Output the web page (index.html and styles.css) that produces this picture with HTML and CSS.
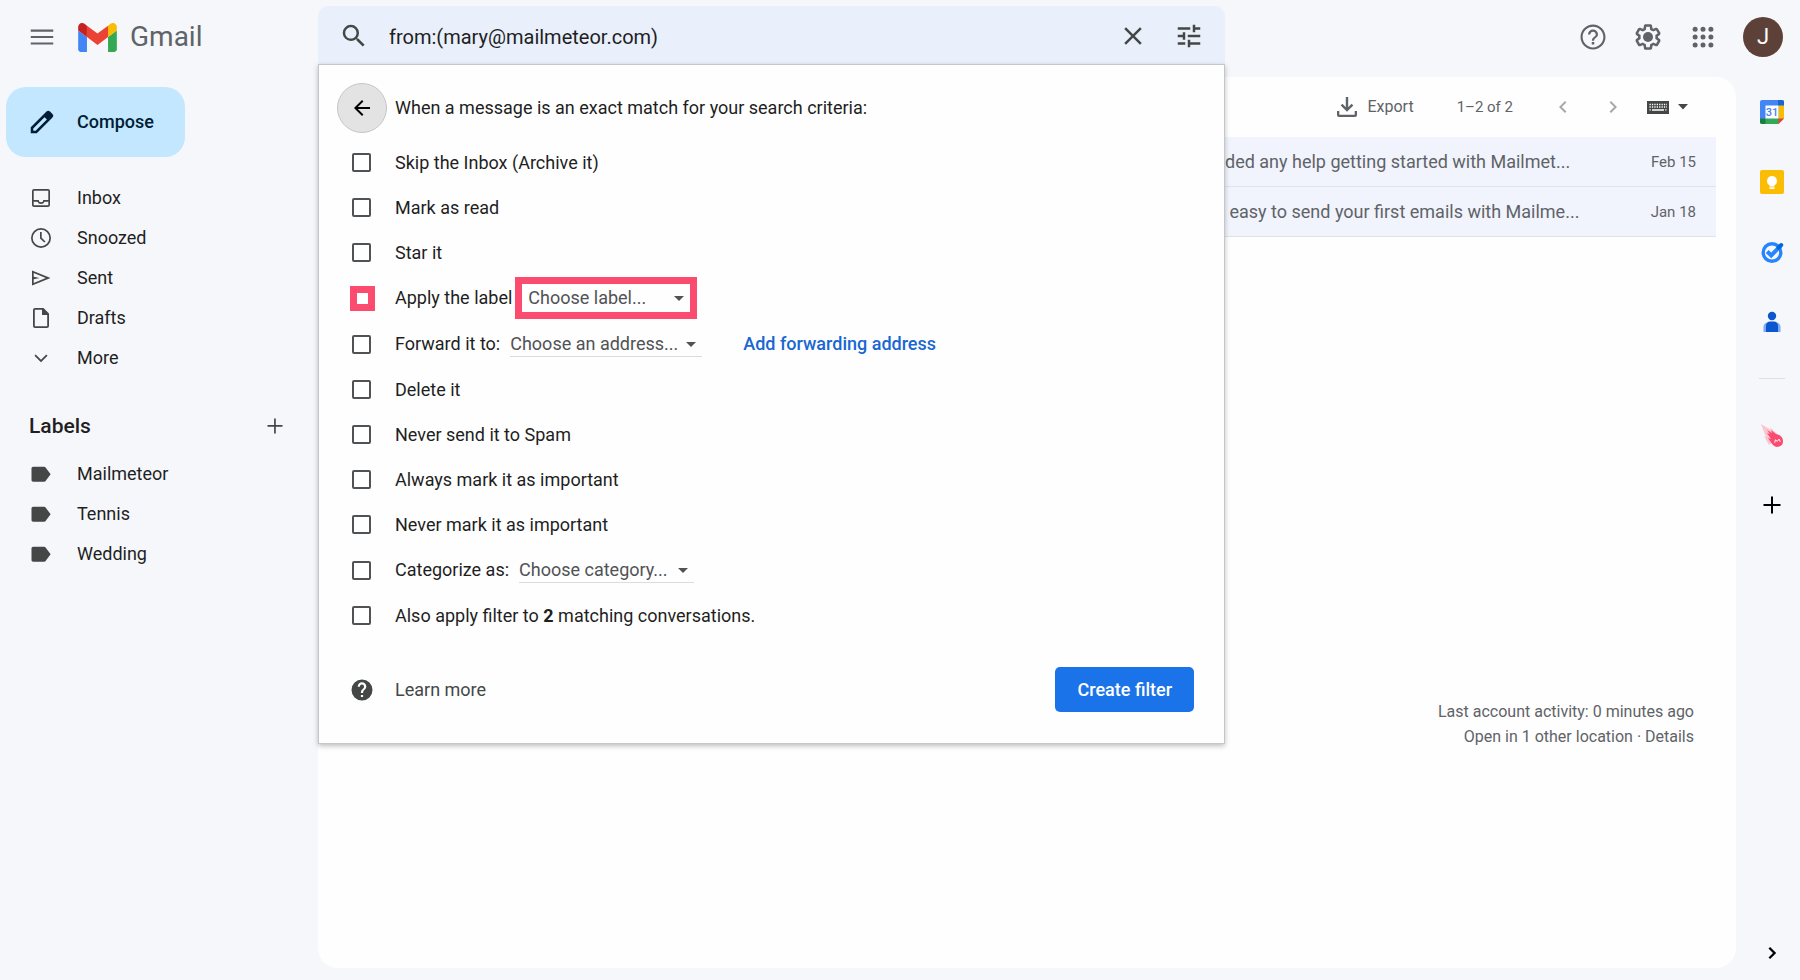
FILE: index.html
```html
<!DOCTYPE html>
<html lang="en">
<head>
<meta charset="utf-8">
<title>Gmail</title>
<link rel="stylesheet" href="styles.css">
</head>
<body>
<div class="app">
  <header class="topbar">
    <div class="brand">
      <button class="icon-btn" type="button" aria-label="Main menu">
        <svg class="icon-lg" viewBox="0 0 24 24"><path d="M3 18h18v-1.700H3zM3 12.850h18v-1.700H3zM3 6v1.700h18V6z"/></svg>
      </button>
      <a class="logo" href="#">
        <svg class="logo-mark" viewBox="52 42 88 66" aria-hidden="true">
          <path fill="#4285f4" d="M58 108h14V74L52 59v43c0 3.320 2.690 6 6 6"/>
          <path fill="#34a853" d="M120 108h14c3.320 0 6-2.690 6-6V59l-20 15"/>
          <path fill="#fbbc04" d="M120 48v26l20-15v-8c0-7.420-8.470-11.650-14.400-7.200"/>
          <path fill="#ea4335" d="M72 74V48l24 18 24-18v26L96 92"/>
          <path fill="#c5221f" d="M52 51v8l20 15V48l-5.600-4.200c-5.940-4.450-14.400-.220-14.400 7.200"/>
        </svg>
        <span class="logo-name">Gmail</span>
      </a>
    </div>

    <div class="search">
      <form class="search-bar">
        <button class="icon-btn" type="button" aria-label="Search">
          <svg class="icon-lg" viewBox="0 0 24 24"><path d="M15.500 14h-.790l-.280-.270A6.470 6.470 0 0 0 16 9.500 6.500 6.500 0 1 0 9.500 16c1.610 0 3.090-.590 4.230-1.570l.270.280v.790l5 4.990L20.490 19zm-6 0C7.010 14 5 11.990 5 9.500S7.010 5 9.500 5 14 7.010 14 9.500 11.990 14 9.500 14"/></svg>
        </button>
        <input class="search-input" type="text" aria-label="Search mail" value="from:(mary@mailmeteor.com)">
        <button class="icon-btn" type="button" aria-label="Clear search">
          <svg class="icon-lg" viewBox="0 0 24 24"><path d="M19 6.410 17.590 5 12 10.590 6.410 5 5 6.410 10.590 12 5 17.590 6.410 19 12 13.410 17.590 19 19 17.590 13.410 12z"/></svg>
        </button>
        <button class="icon-btn" type="button" aria-label="Search options">
          <svg class="icon-lg" viewBox="0 0 24 24"><path d="M3 17v2h6v-2zM3 5v2h10V5zm10 16v-2h8v-2h-8v-2h-2v6zM7 9v2H3v2h4v2h2V9zm14 4v-2H11v2zm-6-4h2V7h4V5h-4V3h-2z"/></svg>
        </button>
      </form>

      <form class="filter">
        <div class="filter-head">
          <button class="back" type="button" aria-label="Back">
            <svg class="icon" viewBox="0 0 24 24"><path d="M20 11H7.830l5.590-5.590L12 4l-8 8 8 8 1.410-1.410L7.830 13H20z"/></svg>
          </button>
          <span>When a message is an exact match for your search criteria:</span>
        </div>
        <div class="rule"><input class="check" type="checkbox" id="archive"><label for="archive">Skip the Inbox (Archive it)</label></div>
        <div class="rule"><input class="check" type="checkbox" id="read"><label for="read">Mark as read</label></div>
        <div class="rule"><input class="check" type="checkbox" id="star"><label for="star">Star it</label></div>
        <div class="rule rule-select">
          <input class="check check-marked" type="checkbox" id="label"><label for="label">Apply the label</label>
          <span class="picker picker-marked"><select aria-label="Label"><option>Choose label...</option></select></span>
        </div>
        <div class="rule rule-select">
          <input class="check" type="checkbox" id="forward"><label for="forward">Forward it to:</label>
          <span class="picker picker-address"><select aria-label="Forwarding address"><option>Choose an address...</option></select></span>
          <a class="add-address" href="#">Add forwarding address</a>
        </div>
        <div class="rule"><input class="check" type="checkbox" id="delete"><label for="delete">Delete it</label></div>
        <div class="rule"><input class="check" type="checkbox" id="spam"><label for="spam">Never send it to Spam</label></div>
        <div class="rule"><input class="check" type="checkbox" id="always"><label for="always">Always mark it as important</label></div>
        <div class="rule"><input class="check" type="checkbox" id="never"><label for="never">Never mark it as important</label></div>
        <div class="rule rule-select">
          <input class="check" type="checkbox" id="category"><label for="category">Categorize as:</label>
          <span class="picker picker-category"><select aria-label="Category"><option>Choose category...</option></select></span>
        </div>
        <div class="rule"><input class="check" type="checkbox" id="also"><label for="also">Also apply filter to <b>2</b> matching conversations.</label></div>
        <div class="filter-foot">
          <a class="learn" href="#">
            <svg class="icon" viewBox="0 0 24 24"><path d="M12 1.500a10.500 10.500 0 1 0 0 21 10.500 10.500 0 0 0 0-21m1.100 17.600h-2.200v-2.200h2.200zm2.200-8.100-.950.970c-.770.780-1.250 1.430-1.250 3.030h-2.200v-.550c0-1.160.480-2.200 1.250-2.980l1.300-1.320c.390-.380.620-.910.620-1.490a2.110 2.110 0 0 0-4.220 0H7.700a4.300 4.300 0 0 1 8.600 0c0 .920-.400 1.750-1 2.340"/></svg>
            <span>Learn more</span>
          </a>
          <button class="create" type="button">Create filter</button>
        </div>
      </form>
    </div>

    <div class="account">
      <button class="icon-btn" type="button" aria-label="Support">
        <svg class="icon-lg" viewBox="0 0 24 24"><path d="M11 18h2v-2h-2zm1-16C6.480 2 2 6.480 2 12s4.480 10 10 10 10-4.480 10-10S17.520 2 12 2m0 18.300c-4.580 0-8.300-3.720-8.300-8.300S7.420 3.700 12 3.700s8.300 3.720 8.300 8.300-3.720 8.300-8.300 8.300M12 6a4 4 0 0 0-4 4h1.800c0-1.200 1-2.200 2.200-2.200s2.200 1 2.200 2.200c0 2-3.100 1.750-3.100 5h1.800c0-2.250 3.100-2.500 3.100-5a4 4 0 0 0-4-4"/></svg>
      </button>
      <button class="icon-btn" type="button" aria-label="Settings">
        <svg class="icon-lg" viewBox="0 0 24 24"><path d="M13.850 22.250h-3.700c-.740 0-1.360-.540-1.450-1.270l-.270-1.890c-.270-.140-.530-.290-.790-.460l-1.800.720c-.700.260-1.470-.030-1.810-.650L2.200 15.530c-.350-.660-.200-1.440.360-1.880l1.530-1.190c-.010-.150-.020-.300-.020-.460 0-.150.010-.310.020-.460l-1.520-1.190c-.590-.450-.740-1.260-.370-1.880l1.850-3.190c.340-.620 1.110-.900 1.790-.630l1.810.730c.260-.170.520-.320.780-.460l.270-1.910c.090-.700.710-1.250 1.440-1.250h3.700c.740 0 1.360.540 1.450 1.270l.270 1.890c.270.140.530.290.790.460l1.800-.720c.710-.260 1.480.030 1.820.650l1.840 3.180c.360.660.200 1.440-.360 1.880l-1.520 1.190c.010.150.020.300.020.460s-.010.310-.020.460l1.520 1.190c.560.450.720 1.230.370 1.860l-1.860 3.220c-.340.620-1.110.900-1.800.630l-1.800-.720c-.260.170-.520.320-.780.460l-.270 1.910c-.100.680-.720 1.220-1.460 1.220zm-3.230-2h2.760l.370-2.550.530-.220c.440-.180.880-.440 1.340-.780l.450-.340 2.380.960 1.380-2.400-2.030-1.580.070-.560c.030-.260.060-.510.060-.780s-.030-.530-.060-.780l-.070-.560 2.030-1.580-1.390-2.400-2.390.960-.450-.350c-.420-.320-.870-.580-1.330-.770l-.520-.220-.370-2.550h-2.760l-.370 2.550-.530.210c-.440.190-.880.440-1.340.790l-.450.330-2.380-.950-1.390 2.390 2.030 1.580-.070.560a7 7 0 0 0-.060.790c0 .260.020.530.060.780l.070.560-2.030 1.580 1.380 2.400 2.390-.960.450.350c.430.330.860.580 1.330.770l.530.220z"/><circle cx="12" cy="12" r="4"/></svg>
      </button>
      <button class="icon-btn" type="button" aria-label="Google apps">
        <svg class="icon-lg" viewBox="0 0 24 24"><circle cx="5.700" cy="5.700" r="2"/><circle cx="12" cy="5.700" r="2"/><circle cx="18.300" cy="5.700" r="2"/><circle cx="5.700" cy="12" r="2"/><circle cx="12" cy="12" r="2"/><circle cx="18.300" cy="12" r="2"/><circle cx="5.700" cy="18.300" r="2"/><circle cx="12" cy="18.300" r="2"/><circle cx="18.300" cy="18.300" r="2"/></svg>
      </button>
      <button class="avatar" type="button" aria-label="Account">J</button>
    </div>
  </header>

  <aside class="sidebar">
    <button class="compose" type="button">
      <svg class="icon-lg" viewBox="0 0 24 24"><path d="M20.400 5.600 18.400 3.600a2 2 0 0 0-2.800 0L3 16.200V21h4.800L20.400 8.400a2 2 0 0 0 0-2.800M6.900 19H5v-1.900l9-9L15.900 10z"/></svg>
      <span>Compose</span>
    </button>
    <nav class="nav">
      <a href="#"><svg class="icon" viewBox="0 0 24 24"><path d="M19 3H5a2 2 0 0 0-2 2v14c0 1.100.900 2 2 2h14a2 2 0 0 0 2-2V5a2 2 0 0 0-2-2m.300 16.300H4.700V15.700h3.700a4 4 0 0 0 7.200 0h3.700zm0-5.300h-5a2.300 2.300 0 0 1-4.600 0h-5V4.700h14.600z"/></svg><span>Inbox</span></a>
      <a href="#"><svg class="icon" viewBox="0 0 24 24"><path d="M12 2a10 10 0 1 0 0 20 10 10 0 0 0 0-20m0 18.300a8.300 8.300 0 1 1 0-16.600 8.300 8.300 0 0 1 0 16.600M12.700 6H11v6.500l4.300 4.100 1.200-1.200-3.800-3.700z"/></svg><span>Snoozed</span></a>
      <a href="#"><svg class="icon" viewBox="0 0 24 24"><path d="M3 4.500v15L21.500 12zm1.700 2.600L16.800 12 4.700 16.900v-3.600L10.500 12l-5.800-1.300z"/></svg><span>Sent</span></a>
      <a href="#"><svg class="icon" viewBox="0 0 24 24"><path d="M14.500 2H6a2 2 0 0 0-2 2v16c0 1.100.900 2 2 2h12a2 2 0 0 0 2-2V7.500zM18.200 20.200H5.800V3.800H13V9h5.200z"/></svg><span>Drafts</span></a>
      <a href="#"><svg class="icon" viewBox="0 0 24 24"><path d="m6.700 8.500 5.300 5.300 5.300-5.300 1.200 1.200-6.500 6.500-6.500-6.500z"/></svg><span>More</span></a>
    </nav>
    <div class="labels-head">
      <h2>Labels</h2>
      <button class="icon-btn" type="button" aria-label="Create new label"><svg class="icon" viewBox="0 0 24 24"><path d="M11.100 4.500h1.700v6.600h6.700v1.700h-6.700v6.700h-1.700v-6.700H4.500v-1.700h6.600z"/></svg></button>
    </div>
    <nav class="nav">
      <a href="#"><svg class="icon" viewBox="0 0 24 24"><path d="M16.600 5.500c-.300-.400-.800-.700-1.400-.700H4.200c-1 0-1.700.700-1.700 1.700v11.500c0 1 .700 1.700 1.700 1.700h11c.600 0 1.100-.300 1.400-.700l5-6.750z"/></svg><span>Mailmeteor</span></a>
      <a href="#"><svg class="icon" viewBox="0 0 24 24"><path d="M16.600 5.500c-.300-.400-.800-.700-1.400-.700H4.200c-1 0-1.700.700-1.700 1.700v11.500c0 1 .700 1.700 1.700 1.700h11c.600 0 1.100-.300 1.400-.700l5-6.750z"/></svg><span>Tennis</span></a>
      <a href="#"><svg class="icon" viewBox="0 0 24 24"><path d="M16.600 5.500c-.300-.400-.800-.700-1.400-.700H4.200c-1 0-1.700.700-1.700 1.700v11.500c0 1 .700 1.700 1.700 1.700h11c.600 0 1.100-.300 1.400-.700l5-6.750z"/></svg><span>Wedding</span></a>
    </nav>
  </aside>

  <main class="mail">
    <div class="toolbar">
      <button class="export" type="button">
        <svg class="icon" viewBox="0 0 24 24"><path d="M10.800 2h2.400v10.200l3.400-3.400 1.700 1.700L12 16.800l-6.300-6.300 1.700-1.700 3.400 3.400zM2 16h2.300v3.700h15.400V16H22v4a2 2 0 0 1-2 2H4a2 2 0 0 1-2-2z"/></svg>
        <span>Export</span>
      </button>
      <span class="count">1–2 of 2</span>
      <button class="icon-btn pager" type="button" aria-label="Newer"><svg class="icon" viewBox="0 0 24 24"><path d="m15.400 7.400-1.400-1.400-6 6 6 6 1.400-1.400-4.600-4.600z"/></svg></button>
      <button class="icon-btn pager" type="button" aria-label="Older"><svg class="icon" viewBox="0 0 24 24"><path d="m8.600 16.600 1.400 1.400 6-6-6-6-1.400 1.400 4.600 4.600z"/></svg></button>
      <button class="icon-btn keyboard" type="button" aria-label="Input tools">
        <svg class="keys" viewBox="0 0 22 14"><path fill="#444746" d="M0 1h22v13H0z"/><path stroke="#fff" stroke-width="1.300" stroke-dasharray="1.300 1.100" d="M2.500 4.500h17.500M2.500 7h17.500"/><path stroke="#fff" stroke-width="1.300" d="M5 10h12M2.500 9.800h1.300M18.200 9.800h1.300"/></svg>
        <svg class="caret" viewBox="0 0 10 6"><path d="M0 0h10L5 5.500z"/></svg>
      </button>
    </div>
    <div class="messages">
      <a class="message" href="#"><span class="snippet">ded any help getting started with Mailmet...</span><time>Feb 15</time></a>
      <a class="message" href="#"><span class="snippet">&nbsp;easy to send your first emails with Mailme...</span><time>Jan 18</time></a>
    </div>
    <footer class="activity">
      <p>Last account activity: 0 minutes ago</p>
      <p>Open in 1 other location · <a href="#">Details</a></p>
    </footer>
  </main>

  <aside class="rail">
    <button class="icon-btn" type="button" aria-label="Calendar">
      <svg class="icon" viewBox="0 0 24 24"><rect width="24" height="24" rx="2" fill="#4285f4"/><path fill="#1967d2" d="M18 0h4a2 2 0 0 1 2 2v4h-6z"/><path fill="#fbbc04" d="M18.500 5.500H24V19h-5.500z"/><path fill="#34a853" d="M5.500 18.500H19V24H5.500z"/><path fill="#188038" d="M0 18.500h5.500V24H2a2 2 0 0 1-2-2z"/><path fill="#f4f7fc" d="M18.500 24 24 18.500V24z"/><path fill="#ea4335" d="M18.500 18.500H24L18.500 24z"/><path fill="#fff" d="M5.500 5.500h13v13h-13z"/><text class="cal-day" x="12" y="16" text-anchor="middle">31</text></svg>
    </button>
    <button class="icon-btn" type="button" aria-label="Keep">
      <svg class="icon" viewBox="0 0 24 24"><rect width="24" height="24" rx="2" fill="#fbbc04"/><path fill="#fff" d="M12 6a5 5 0 0 0-2.500 9.300v1.200h5v-1.200A5 5 0 0 0 12 6M9.500 17.300h5v1.700h-5z"/></svg>
    </button>
    <button class="icon-btn" type="button" aria-label="Tasks">
      <svg class="icon" viewBox="0 0 24 24"><circle cx="12" cy="12.500" r="8.800" fill="none" stroke="#2684fc" stroke-width="3.400"/><path fill="none" stroke="#2684fc" stroke-width="4" d="m7.200 11.500 4 4L20.500 6"/><path fill="none" stroke="#0066da" stroke-width="4" stroke-linecap="round" d="m18.600 7.600 2.600-2.600"/></svg>
    </button>
    <button class="icon-btn" type="button" aria-label="Contacts">
      <svg class="icon" viewBox="0 0 24 24"><circle cx="12" cy="6" r="4.200" fill="#0b57d0"/><path fill="#7baaf7" d="M3.500 17a4.500 4.500 0 0 1 4.500-4.500h8a4.500 4.500 0 0 1 4.500 4.500v5h-17z"/><path fill="#0b57d0" d="M6 15.500c0-2.300 1.800-4 4-4h4c2.200 0 4 1.700 4 4V22H6z"/></svg>
    </button>
    <hr class="rail-line">
    <button class="icon-btn" type="button" aria-label="Mailmeteor">
      <svg class="icon" viewBox="0 0 24 24"><path fill="#fcc5cf" d="M1 0 11 6l-1-3 6 6 4 3-11 9-5-9 2 1z"/><path fill="#fb4b6e" d="m7 6 5 3-1-3 5 4c4 1 7 3 7 7a5.800 5.800 0 0 1-10.500 3.500L8 14l3 1-4-6 3 1z"/><path fill="none" stroke="#fff" stroke-width="1" d="m14.800 18.800.5-3 2 1.500 1.800-2.200 1.200 2.700"/></svg>
    </button>
    <button class="icon-btn add-on" type="button" aria-label="Get add-ons"><svg class="icon" viewBox="0 0 24 24"><path d="M11 3.500h2V11h7.500v2H13v7.500h-2V13H3.500v-2H11z"/></svg></button>
    <button class="icon-btn add-on collapse" type="button" aria-label="Hide side panel"><svg class="icon" viewBox="0 0 24 24"><path d="m8.500 16.500 1.600 1.600 6.100-6.100-6.100-6.100-1.600 1.600L13 12z"/></svg></button>
  </aside>
</div>
</body>
</html>
```

FILE: styles.css
```css
* { box-sizing: border-box; }

body {
  margin: 0;
  background: #f5f7fb;
  color: #1f1f1f;
  font-family: Roboto, "Liberation Sans", sans-serif;
  font-size: 18px;
  line-height: 24px;
}

button, input, select { font: inherit; color: inherit; }
button { border: 0; padding: 0; background: none; }
a { color: inherit; text-decoration: none; }
svg { display: block; flex: none; fill: currentColor; }

.icon { width: 24px; height: 24px; }
.icon-lg { width: 30px; height: 30px; }
.icon-btn { display: flex; align-items: center; justify-content: center; color: #444746; }

.app {
  display: grid;
  grid-template: auto 1fr / 318px minmax(0, 1fr) 64px;
  min-height: 100vh;
}

/* Top bar */
.topbar {
  grid-column: 1 / -1;
  display: grid;
  grid-template-columns: 318px minmax(0, 907px) 1fr;
  height: 77px;
  padding-top: 6px;
}
.brand { display: flex; align-items: center; gap: 21px; height: 62px; padding-left: 27px; }
.brand .icon-btn { color: #5f6368; }
.logo { display: flex; align-items: center; gap: 13px; }
.logo-mark { width: 39px; height: 29px; }
.logo-name { color: #5f6368; font-size: 28px; line-height: 32px; }

.search { position: relative; }
.search-bar {
  display: flex;
  align-items: center;
  height: 58px;
  padding: 2px 21px 0 21px;
  background: #e9f0fb;
  border-radius: 10px 10px 0 0;
}
.search-input {
  flex: 1;
  min-width: 0;
  margin: 0 20px;
  padding: 2px 0 0;
  border: 0;
  outline: 0;
  background: none;
  font-size: 20px;
}
.search-bar .icon-btn + .icon-btn { margin-left: 26px; }

.account { display: flex; align-items: center; justify-content: flex-end; gap: 25px; height: 62px; padding-right: 17px; }
.account .icon-btn { color: #5f6368; }
.avatar { width: 40px; height: 40px; border-radius: 50%; background: #5d4037; color: #fff; font-size: 22px; }

/* Filter panel */
.filter {
  position: absolute;
  top: 58px;
  left: 0;
  right: 0;
  z-index: 2;
  padding: 18px 30px 31px 18px;
  background: #fefefe;
  border: 1px solid #c4c7c9;
  box-shadow: 0 2px 5px rgba(0, 0, 0, 0.25);
}
.filter-head { display: flex; align-items: center; gap: 8px; margin-bottom: 7px; }
.back {
  display: grid;
  place-items: center;
  width: 50px;
  height: 50px;
  border: 1px solid #c6c6c6;
  border-radius: 50%;
  background: #e3e3e3;
  color: #000;
}
.rule { display: flex; align-items: center; height: 45px; padding-left: 15px; }
.rule-select { height: 46px; }
.check {
  appearance: none;
  width: 19px;
  height: 19px;
  margin: 0 24px 0 0;
  border: 2px solid #505355;
  border-radius: 2px;
  background: #fff;
}
.check-marked {
  width: 25px;
  height: 25px;
  margin: 0 20px 0 -2px;
  border: 7px solid #fb4b6e;
  border-radius: 0;
}
.picker { position: relative; display: flex; margin-left: 10px; border-bottom: 1px solid #dcdcdc; }
.picker::after {
  content: "";
  position: absolute;
  right: 6px;
  top: 10px;
  border: 5px solid transparent;
  border-top-color: #505355;
  border-bottom: 0;
  pointer-events: none;
}
.picker select {
  appearance: none;
  width: 100%;
  padding: 0;
  border: 0;
  background: none;
  color: #505355;
}
.picker-address { width: 192px; }
.picker-category { width: 175px; }
.picker-marked { width: 182px; margin-left: 3px; padding: 2px 0 2px 6px; border: 7px solid #fb4b6e; }
.picker-marked::after { top: 12px; }
.add-address { margin-left: 41px; color: #1967d2; font-weight: 500; }
.filter-foot { display: flex; align-items: center; justify-content: space-between; margin-top: 29px; }
.learn { display: flex; align-items: center; gap: 21px; padding-left: 13px; color: #444746; }
.create { height: 45px; padding: 0 22px; border-radius: 5px; background: #1a73e8; color: #fff; font-weight: 500; }

/* Sidebar */
.sidebar { padding-top: 10px; }
.compose {
  display: flex;
  align-items: center;
  gap: 20px;
  height: 70px;
  margin: 0 0 21px 6px;
  padding: 0 31px 0 21px;
  border-radius: 20px;
  background: #c2e7ff;
  color: #001d35;
  font-weight: 500;
}
.nav a { display: flex; align-items: center; gap: 24px; height: 40px; padding-left: 29px; }
.nav svg { color: #444746; }
.labels-head { display: flex; align-items: center; justify-content: space-between; height: 56px; margin: 20px 31px 0 29px; }
.labels-head h2 { margin: 0; font-size: 21px; font-weight: 500; }

/* Message list */
.mail { margin-bottom: 12px; border-radius: 20px; background: #fefefe; }
.toolbar { display: flex; align-items: center; justify-content: flex-end; height: 60px; padding-right: 48px; color: #5f6368; font-size: 16px; }
.export { display: flex; align-items: center; gap: 8px; }
.count { margin: 0 38px 0 43px; font-size: 15px; }
.pager { margin-right: 26px; color: #a5a8ab; }
.pager + .pager { margin-right: 22px; }
.keyboard { gap: 9px; }
.keys { width: 22px; height: 14px; }
.caret { width: 10px; height: 6px; }
.messages { margin-right: 20px; }
.message {
  display: flex;
  align-items: center;
  justify-content: flex-end;
  height: 50px;
  padding-right: 20px;
  border-bottom: 1px solid #dfe3ea;
  background: #f1f4fc;
  color: #5f6368;
}
.snippet { width: 350px; white-space: nowrap; }
.message time { width: 121px; text-align: right; font-size: 15px; }
.activity { margin: 462px 42px 0 0; color: #5f6368; font-size: 16px; line-height: 25px; text-align: right; }
.activity p { margin: 0; }

/* Side panel */
.rail { display: flex; flex-direction: column; align-items: center; padding: 23px 0 15px 8px; }
.rail .icon-btn { margin-bottom: 46px; }
.rail-line { width: 26px; margin: -2px 0 45px; border: 0; border-top: 1px solid #dcdfe3; }
.cal-day { fill: #4285f4; font-size: 11px; font-weight: 500; }
.rail .add-on { margin-top: -1px; color: #000; }
.rail .collapse { margin-top: auto; margin-bottom: 0; }
```
